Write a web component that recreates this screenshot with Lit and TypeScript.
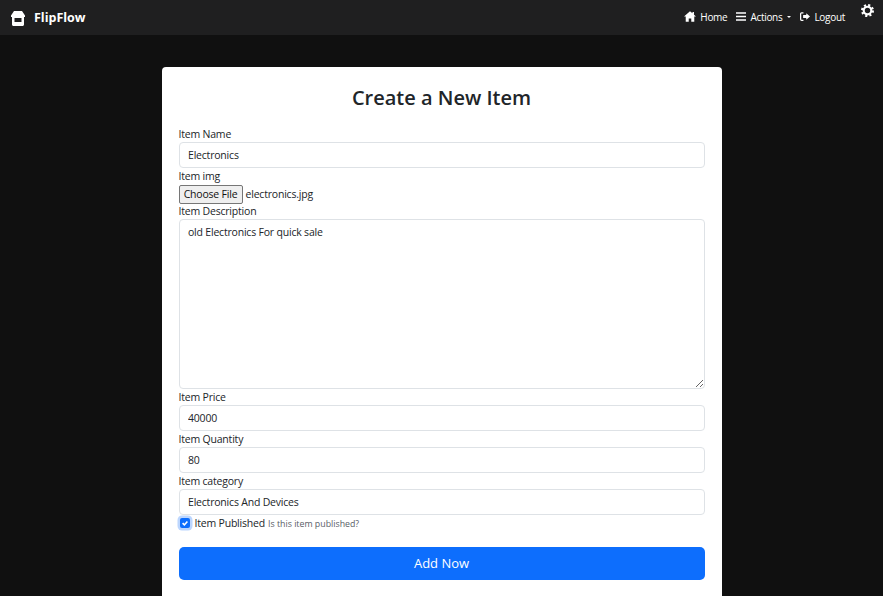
import { LitElement, html, css } from "lit";
import { customElement } from "lit/decorators.js";

@customElement("app-root")
export class AppRoot extends LitElement {
  static styles = css`
    :host { display: block; height: 596px; overflow: hidden; background: #101010; font-family: "Open Sans", "Noto Sans", sans-serif; color: #212529; }
    * { box-sizing: border-box; }
    .nav { height: 35px; background: #1f1f20; display: flex; align-items: flex-start; padding: 0 9px 0 11px; color: #fff; font-size: 10px; letter-spacing: -0.3px; }
    .brand { display: flex; align-items: center; gap: 9px; height: 35px; font-weight: 700; font-size: 12.5px; letter-spacing: 0; }
    .brand svg { width: 14px; height: 15px; fill: #fff; margin-top: 1px; }
    .links { margin-left: auto; display: flex; align-items: center; height: 33px; }
    .link { display: flex; align-items: center; gap: 4px; margin-left: 9px; }
    .link svg { fill: #fff; width: 12px; height: 11px; }
    .link svg.narrow { width: 10px; }
    .caret { width: 0; height: 0; border: 2.5px solid transparent; border-top-color: #fff; border-bottom: 0; margin-left: 1px; }
    .gear { width: 13px; height: 13px; margin: 4px 0 0 16px; display: block; fill: none; stroke: #fff; }
    .main { display: flex; justify-content: center; padding-top: 32px; }
    .card { width: 560px; background: #fff; border-radius: 4px; padding: 18px 17px 0; height: 540px; }
    h1 { margin: 0 0 16px; height: 26px; line-height: 26px; font-size: 20px; font-weight: 600; text-align: center; }
    label { display: block; font-size: 10.5px; line-height: 15px; letter-spacing: -0.2px; color: #212529; }
    .input { display: block; width: 100%; height: 26px; border: 1px solid #dee2e6; border-radius: 4px; padding: 0 9px 0 8.5px; font: inherit; font-size: 10.5px; letter-spacing: -0.2px; color: #212529; outline: none; background: #fff; }
    .file { display: flex; align-items: center; gap: 3px; font-size: 10.5px; letter-spacing: -0.2px; height: 20px; }
    .file button { height: 19px; width: 64px; padding: 0; font: inherit; font-size: 10.5px; letter-spacing: -0.2px; background: #efefef; border: 1px solid #767676; border-radius: 2px; color: #111; }
    textarea.input { height: 170px; padding: 5px 9px 5px 8.5px; resize: vertical; line-height: 15px; display: block; }
    .gap { margin-top: 1px; }
    .check { display: flex; align-items: center; gap: 5px; height: 15px; font-size: 10.5px; letter-spacing: -0.2px; }
    .box { width: 10px; height: 10px; margin-left: 1px; background: #0d6efd; border-radius: 2px; box-shadow: 0 0 0 2.5px #bcd6fe; display: flex; align-items: center; justify-content: center; }
    .box svg { width: 8px; height: 8px; stroke: #fff; fill: none; stroke-width: 2; }
    small { font-size: 8.8px; letter-spacing: 0; color: #5a6067; margin-left: 3px; }
    .btn { display: block; width: 100%; height: 33px; margin-top: 17px; padding: 0 0 2px; border: 0; border-radius: 5px; background: #0d6efd; color: #fff; font: inherit; font-size: 13px; }
  `;

  render() {
    return html`
      <nav class="nav">
        <div class="brand">
          <svg viewBox="0 0 14 15"><path fill-rule="evenodd" d="M3 0h8l3 4.500V6H13v7.500c0 .8-.7 1.500-1.500 1.500h-9C1.700 15 1 14.300 1 13.500V6H0V4.500zM3.500 7v4h7V7z"/></svg>
          FlipFlow
        </div>
        <div class="links">
          <div class="link"><svg viewBox="0 0 16 14"><path d="M8 0 0 7h2.300v7h4V9.500h3.400V14h4V7H16l-2.700-2.400V1h-2v1.800z"/></svg>Home</div>
          <div class="link"><svg class="narrow" viewBox="0 0 14 12"><path d="M0 0h14v2.200H0zM0 4.900h14v2.200H0zM0 9.800h14V12H0z"/></svg>Actions<span class="caret"></span></div>
          <div class="link"><svg class="narrow" viewBox="0 0 16 14"><path d="M5.500 0H2.500A2.500 2.500 0 0 0 0 2.500v9A2.500 2.500 0 0 0 2.500 14h3v-2h-3a.5.5 0 0 1-.5-.5v-9a.5.5 0 0 1 .5-.5h3zM10 1.800 16 7l-6 5.200V9.300H5V4.700h5z"/></svg>Logout</div>
        </div>
        <svg class="gear" viewBox="0 0 24 24"><circle cx="12" cy="12" r="7" stroke-width="4"/><circle cx="12" cy="12" r="10" stroke-width="4" stroke-dasharray="3.930 3.924"/></svg>
      </nav>
      <div class="main">
        <div class="card">
          <h1>Create a New Item</h1>
          <label>Item Name</label>
          <input class="input" .value=${"Electronics"} />
          <label class="gap">Item img</label>
          <div class="file"><button>Choose File</button><span>electronics.jpg</span></div>
          <label>Item Description</label>
          <textarea class="input" .value=${"old Electronics For quick sale"}></textarea>
          <label class="gap">Item Price</label>
          <input class="input" .value=${"40000"} />
          <label class="gap">Item Quantity</label>
          <input class="input" .value=${"80"} />
          <label class="gap">Item category</label>
          <input class="input" .value=${"Electronics And Devices"} />
          <div class="check">
            <span class="box"><svg viewBox="0 0 10 10"><path d="M2 5.200 4.200 7.400 8 3"/></svg></span>
            <span>Item Published<small>Is this item published?</small></span>
          </div>
          <button class="btn">Add Now</button>
        </div>
      </div>
    `;
  }
}
